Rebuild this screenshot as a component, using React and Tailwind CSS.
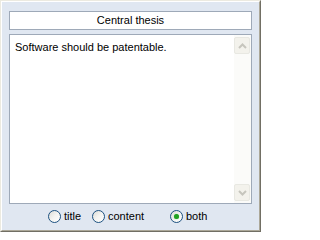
function Radio({ checked }) {
  return (
    <span className="relative flex h-[13px] w-[13px] shrink-0 items-center justify-center rounded-full border border-[#1c5180] bg-gradient-to-br from-[#dcdcd6] via-[#f4f4f1] to-white">
      {checked && <span className="h-[5px] w-[5px] rounded-full bg-[#21a121] shadow-[0_0_1px_#5fd35f]" />}
    </span>
  );
}

function ScrollButton({ up }) {
  return (
    <div className="flex h-[17px] w-[16px] items-center justify-center rounded-[2px] border border-[#e8e8e2] bg-[#f3f2ec]">
      <svg width="9" height="6" viewBox="0 0 9 6">
        <path
          d={up ? 'M1 5 L4.5 1.5 L8 5' : 'M1 1 L4.5 4.5 L8 1'}
          fill="none"
          stroke="#c6c5bd"
          strokeWidth="2"
        />
      </svg>
    </div>
  );
}

export default function App() {
  const options = [
    { label: 'title', width: 'w-[44px]' },
    { label: 'content', width: 'w-[78px]' },
    { label: 'both', width: 'w-[50px]', checked: true },
  ];

  return (
    <div className="h-[236px] w-[262px] bg-white font-['Liberation_Sans',sans-serif] text-[11px] text-black">
      <div className="h-[232px] w-[261px] border-l border-t border-r border-b border-l-[#eceae0] border-t-[#eceae0] border-r-[#716f64] border-b-[#716f64]">
        <div className="flex h-full w-full flex-col border-l border-t border-r border-b border-l-white border-t-white border-r-[#aca899] border-b-[#aca899] bg-[#e0e7f1] px-[7px] pt-[9px]">
          <div className="flex h-[19px] items-center justify-center border border-[#9ea9b8] bg-white">
            Central thesis
          </div>
          <div className="mt-[4px] flex h-[170px] border border-[#9ea9b8] bg-white">
            <div className="flex-1 pl-[5px] pt-[4px]">Software should be patentable.</div>
            <div className="flex w-[17px] flex-col justify-between bg-[#fbfbf9] py-[2px] pr-[1px]">
              <ScrollButton up />
              <ScrollButton />
            </div>
          </div>
          <div className="flex h-[24px] items-center pl-[39px]">
            {options.map((o) => (
              <div key={o.label} className={`flex items-center gap-[3px] ${o.width}`}>
                <Radio checked={o.checked} />
                <span className="leading-none">{o.label}</span>
              </div>
            ))}
          </div>
        </div>
      </div>
    </div>
  );
}
